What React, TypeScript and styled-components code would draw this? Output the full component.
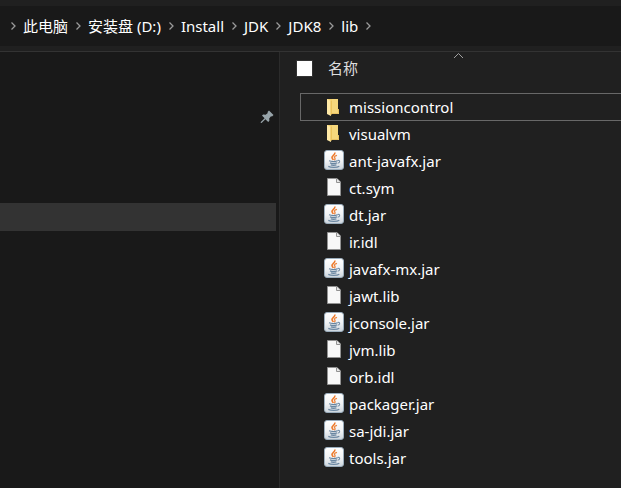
import React from "react";
import styled, { createGlobalStyle } from "styled-components";

const GlobalStyle = createGlobalStyle`
  * { box-sizing: border-box; }
  html, body, #root { height: 100%; }
  body {
    margin: 0;
    background: #202020;
    color: #ffffff;
    font-family: "Noto Sans", "Noto Sans CJK SC", sans-serif;
    font-size: 15px;
  }
  button {
    border: 0;
    padding: 0;
    background: none;
    color: inherit;
    font: inherit;
    text-align: left;
  }
`;

const Explorer = styled.div`
  display: flex;
  flex-direction: column;
  min-height: 100%;
  overflow: hidden;
`;

const AddressArea = styled.header`
  padding: 6px 0 5px;
  border-bottom: 1px solid #333333;
`;

const AddressBar = styled.nav`
  display: flex;
  align-items: center;
  height: 40px;
  padding-left: 3px;
  background: #191919;
`;

const Crumb = styled.button`
  line-height: 20px;
  white-space: nowrap;
`;

const Separator = styled.svg`
  flex: none;
  width: 20px;
  height: 10px;
`;

const Panes = styled.div`
  display: flex;
  flex: 1;
`;

const Sidebar = styled.aside`
  flex: 0 0 280px;
  padding: 51px 3px 0 0;
  background: #191919;
  border-right: 1px solid #2b2b2b;
`;

const SidebarRow = styled.div<{ $active?: boolean }>`
  display: flex;
  align-items: center;
  justify-content: flex-end;
  height: 28px;
  padding-right: 2px;
  margin-bottom: ${(p) => (p.$active ? "0" : "72px")};
  background: ${(p) => (p.$active ? "#333333" : "transparent")};
`;

const FilePane = styled.main`
  flex: 1;
  min-width: 0;
  padding-left: 16px;
`;

const ColumnHeader = styled.div`
  position: relative;
  display: flex;
  align-items: center;
  gap: 15px;
  height: 32px;
  margin-bottom: 9px;
`;

const SelectAll = styled.input`
  appearance: none;
  width: 17px;
  height: 17px;
  margin: 0;
  background: #ffffff;
  border: 1px solid #333333;
`;

const ColumnName = styled.button`
  line-height: 20px;
  color: #dedede;
`;

const SortMark = styled.svg`
  position: absolute;
  top: 0;
  left: 157px;
  width: 11px;
  height: 7px;
`;

const FileList = styled.ul`
  margin: 0 0 0 4px;
  padding: 0;
  list-style: none;
`;

const FileRow = styled.button<{ $focused: boolean }>`
  display: flex;
  align-items: center;
  width: calc(100% + 1px);
  height: ${(p) => (p.$focused ? "28px" : "27px")};
  margin-bottom: ${(p) => (p.$focused ? "-1px" : "0")};
  padding-left: 23px;
  border: 1px solid ${(p) => (p.$focused ? "#686868" : "transparent")};
  line-height: 20px;
  white-space: nowrap;
`;

const IconSlot = styled.span`
  display: flex;
  justify-content: center;
  flex: none;
  width: 20px;
  height: 21px;
  margin-right: 5px;
`;

type Kind = "folder" | "jar" | "file";

const FolderIcon = () => (
  <svg width="20" height="20" viewBox="0 0 20 20" aria-hidden="true">
    <path d="M3 2H14V12L15 13V17H3Z" fill="#f3cf6b" />
    <path d="M8 2H14V12L15 13V17H8Z" fill="#f6d77c" />
    <path d="M3 2L7 4V19L3 17Z" fill="#ffe9a6" />
    <path d="M7 4V18" stroke="#e6b94f" strokeWidth="1" />
    <path d="M14 12L14.5 13V16.5H8" fill="none" stroke="#e9c263" strokeWidth="1" />
  </svg>
);

const JarIcon = () => (
  <svg width="20" height="20" viewBox="0 0 20 20" aria-hidden="true">
    <defs>
      <linearGradient id="tile" x1="0" y1="0" x2="0" y2="1">
        <stop offset="0" stopColor="#ffffff" />
        <stop offset="0.55" stopColor="#f0f2f4" />
        <stop offset="1" stopColor="#cbd4dc" />
      </linearGradient>
    </defs>
    <rect x="0.5" y="0.5" width="19" height="19" rx="2.5" fill="url(#tile)" stroke="#9badbc" />
    <path d="M10.8 2.4C11.7 5 6.8 5.7 8.2 8.2C8.5 8.9 9.1 9.4 9.3 10" fill="none" stroke="#ed7a2c" strokeWidth="1.6" />
    <path d="M13 5.3C9.6 6.3 10.2 7.4 11 8.3C11.4 9 10.9 9.7 10.3 10.2" fill="none" stroke="#ee8740" strokeWidth="1.3" />
    <path d="M5 10.8C7.5 11.7 11.4 11.6 13.6 10.7M6 12.9C8 13.7 11 13.6 13 12.9M6.8 14.9C8.5 15.5 10.8 15.4 12.4 14.9" fill="none" stroke="#6885a0" strokeWidth="1.2" />
    <path d="M13.5 10.5C16.4 9.9 16.3 12.5 13.6 13.3" fill="none" stroke="#7892aa" strokeWidth="1.1" />
    <path d="M4.3 16.4C7 17.8 13 17.7 15.3 16.2" fill="none" stroke="#6d89a3" strokeWidth="1.2" />
  </svg>
);

const DocumentIcon = () => (
  <svg width="20" height="20" viewBox="0 0 20 20" aria-hidden="true">
    <path d="M3.5 1.5H13L16.5 5V18.5H3.5Z" fill="#f8f8f8" stroke="#929292" />
    <path d="M12.5 1.5V5.5H16.5" fill="#e7e7e7" stroke="#929292" />
  </svg>
);

const PinIcon = () => (
  <svg width="14" height="14" viewBox="0 0 14 14" aria-hidden="true">
    <path d="M9 0.5L13.5 5L12 6.4L11 6.2L9.2 8.4L9.4 10.8L8.2 12L5.4 9.3L1.6 13L0.6 12.7L0.8 11.9L4.6 8.3L2 5.6L3.2 4.6L5.7 4.8L7.8 3L7.5 2Z" fill="#98a4aa" />
  </svg>
);

const icons: Record<Kind, () => React.JSX.Element> = {
  folder: FolderIcon,
  jar: JarIcon,
  file: DocumentIcon,
};

const Chevron = () => (
  <Separator viewBox="0 0 20 10" aria-hidden="true">
    <path d="M8.5 1.5L12 5L8.5 8.5" fill="none" stroke="#9a9a9a" strokeWidth="1.3" />
  </Separator>
);

const crumbs = ["此电脑", "安装盘 (D:)", "Install", "JDK", "JDK8", "lib"];

const files: { name: string; kind: Kind }[] = [
  { name: "missioncontrol", kind: "folder" },
  { name: "visualvm", kind: "folder" },
  { name: "ant-javafx.jar", kind: "jar" },
  { name: "ct.sym", kind: "file" },
  { name: "dt.jar", kind: "jar" },
  { name: "ir.idl", kind: "file" },
  { name: "javafx-mx.jar", kind: "jar" },
  { name: "jawt.lib", kind: "file" },
  { name: "jconsole.jar", kind: "jar" },
  { name: "jvm.lib", kind: "file" },
  { name: "orb.idl", kind: "file" },
  { name: "packager.jar", kind: "jar" },
  { name: "sa-jdi.jar", kind: "jar" },
  { name: "tools.jar", kind: "jar" },
];

export default function App() {
  return (
    <>
      <GlobalStyle />
      <Explorer lang="zh-CN">
        <AddressArea>
          <AddressBar>
            <Chevron />
            {crumbs.map((name) => (
              <React.Fragment key={name}>
                <Crumb type="button">{name}</Crumb>
                <Chevron />
              </React.Fragment>
            ))}
          </AddressBar>
        </AddressArea>
        <Panes>
          <Sidebar>
            <SidebarRow>
              <PinIcon />
            </SidebarRow>
            <SidebarRow $active />
          </Sidebar>
          <FilePane>
            <ColumnHeader>
              <SelectAll type="checkbox" aria-labelledby="name-column" />
              <ColumnName type="button" id="name-column">名称</ColumnName>
              <SortMark viewBox="0 0 11 7" aria-hidden="true">
                <path d="M1 6L5.5 1.5L10 6" fill="none" stroke="#a0a0a0" />
              </SortMark>
            </ColumnHeader>
            <FileList>
              {files.map(({ name, kind }, index) => {
                const Icon = icons[kind];
                return (
                  <li key={name}>
                    <FileRow type="button" $focused={index === 0}>
                      <IconSlot>
                        <Icon />
                      </IconSlot>
                      {name}
                    </FileRow>
                  </li>
                );
              })}
            </FileList>
          </FilePane>
        </Panes>
      </Explorer>
    </>
  );
}
